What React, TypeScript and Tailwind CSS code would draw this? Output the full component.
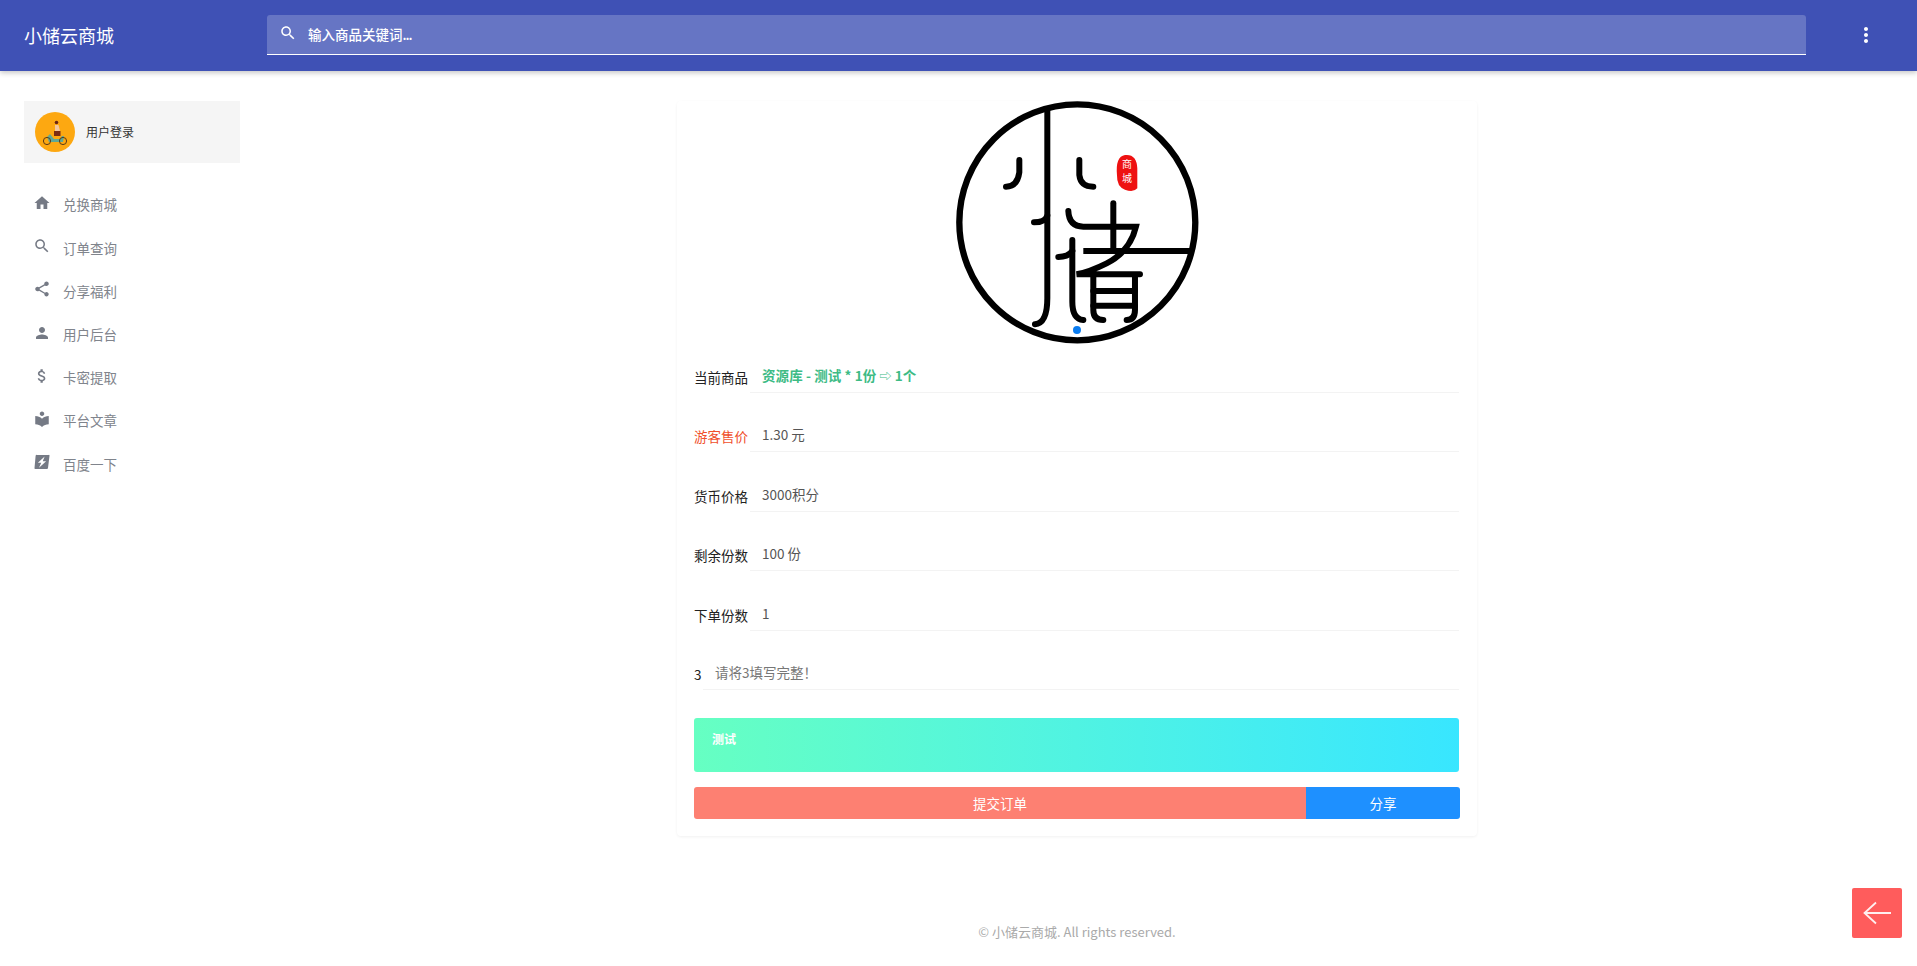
import type { ReactNode } from "react";

const FONT = "font-['Noto_Sans_CJK_SC','Microsoft_YaHei',sans-serif]";

const navItems = [
  {
    label: "兑换商城",
    d: "M10 20v-6h4v6h5v-8h3L12 3 2 12h3v8z",
  },
  {
    label: "订单查询",
    d: "M15.5 14h-.79l-.28-.27C15.41 12.59 16 11.11 16 9.5 16 5.91 13.09 3 9.5 3S3 5.91 3 9.5 5.91 16 9.5 16c1.61 0 3.09-.59 4.23-1.57l.27.28v.79l5 4.99L20.49 19l-4.99-5zm-6 0C7.01 14 5 11.99 5 9.5S7.01 5 9.5 5 14 7.01 14 9.5 11.99 14 9.5 14z",
  },
  {
    label: "分享福利",
    d: "M18 16.08c-.76 0-1.44.3-1.96.77L8.91 12.7c.05-.23.09-.46.09-.7s-.04-.47-.09-.7l7.05-4.11c.54.5 1.25.81 2.04.81 1.66 0 3-1.34 3-3s-1.34-3-3-3-3 1.34-3 3c0 .24.04.47.09.7L8.04 9.81C7.5 9.31 6.79 9 6 9c-1.66 0-3 1.34-3 3s1.34 3 3 3c.79 0 1.5-.31 2.04-.81l7.12 4.16c-.05.21-.08.43-.08.65 0 1.61 1.31 2.92 2.92 2.92 1.61 0 2.92-1.31 2.92-2.92s-1.31-2.92-2.92-2.92z",
  },
  {
    label: "用户后台",
    d: "M12 12c2.21 0 4-1.79 4-4s-1.79-4-4-4-4 1.79-4 4 1.79 4 4 4zm0 2c-2.67 0-8 1.34-8 4v2h16v-2c0-2.66-5.33-4-8-4z",
  },
  {
    label: "卡密提取",
    d: "M11.8 10.9c-2.27-.59-3-1.2-3-2.15 0-1.09 1.01-1.85 2.7-1.85 1.78 0 2.44.85 2.5 2.1h2.21c-.07-1.72-1.12-3.3-3.21-3.81V3h-3v2.16c-1.94.42-3.5 1.68-3.5 3.61 0 2.31 1.91 3.46 4.7 4.13 2.5.6 3 1.48 3 2.41 0 .69-.49 1.79-2.7 1.79-2.06 0-2.87-.92-2.98-2.1h-2.2c.12 2.19 1.76 3.42 3.68 3.83V21h3v-2.15c1.95-.37 3.5-1.5 3.5-3.55 0-2.84-2.43-3.81-4.7-4.4z",
  },
  {
    label: "平台文章",
    d: "M12 11.55C9.64 9.35 6.48 8 3 8v11c3.48 0 6.64 1.35 9 3.55 2.36-2.19 5.52-3.55 9-3.55V8c-3.48 0-6.64 1.35-9 3.55zM12 8c1.66 0 3-1.34 3-3s-1.34-3-3-3-3 1.34-3 3 1.34 3 3 3z",
  },
  {
    label: "百度一下",
    d: "M5 2.5h16a1 1 0 0 1 1 1.2L20 20a1.5 1.5 0 0 1-1.5 1.2H3a1 1 0 0 1-1-1.2L3.5 3.7A1.5 1.5 0 0 1 5 2.5zM15.5 4.5L6.5 13h4.5L8 19.5l9.5-8.5H13z",
  },
];

const rows: { label: string; value: ReactNode; labelCls: string; valueCls: string }[] = [
  {
    label: "当前商品",
    value: (
      <>
        资源库 - 测试 * 1份 <span className="text-[12px] font-normal">⇨</span> 1个
      </>
    ),
    labelCls: "text-[#222]",
    valueCls: "text-[#3dbb85] font-bold tracking-[0.1px]",
  },
  { label: "游客售价", value: "1.30 元", labelCls: "text-[#f0502c]", valueCls: "text-[#555]" },
  { label: "货币价格", value: "3000积分", labelCls: "text-[#222]", valueCls: "text-[#555]" },
  { label: "剩余份数", value: "100 份", labelCls: "text-[#222]", valueCls: "text-[#555]" },
  { label: "下单份数", value: "1", labelCls: "text-[#222]", valueCls: "text-[#555]" },
];

const Logo = () => (
  <svg viewBox="0 0 320 270" className="w-[320px] h-[270px] block" fill="none" stroke="#000" strokeLinecap="round">
    <g transform="scale(0.3333)" strokeWidth="18">
      <circle cx="472" cy="412" r="354" strokeWidth="19" />
      <path d="M382 75V640Q382 715 345 718" />
      <path d="M342 412Q375 412 382 392" />
      <path d="M298 225V262Q292 305 258 305" />
      <path d="M478 225V270Q482 305 520 305" />
      <path d="M445 378Q447 425 490 425H648Q630 500 560 535Q510 560 470 568H660" />
      <path d="M580 355V498" />
      <path d="M490 498H820" strokeLinecap="butt" />
      <path d="M457 465V650Q457 702 490 705" />
      <path d="M415 516Q445 516 457 498" />
      <path d="M520 570V675Q520 705 550 705" />
      <path d="M645 570V675Q645 705 620 705" />
      <path d="M520 618H645M520 662H645" />
      <circle cx="471" cy="735" r="12" fill="#0a7cf0" stroke="none" />
      <path
        d="M615 210Q650 206 652 250L652 310Q640 324 615 314Q590 305 591 270Q586 215 615 210z"
        fill="#ee1111"
        stroke="none"
      />
      <text x="621" y="250" textAnchor="middle" fontSize="30" fill="#fff" stroke="none">商</text>
      <text x="621" y="292" textAnchor="middle" fontSize="30" fill="#fff" stroke="none">城</text>
    </g>
  </svg>
);

const Avatar = () => (
  <div className="w-10 h-10 rounded-full bg-[#fda811] shrink-0 overflow-hidden">
    <svg viewBox="0 0 40 40" className="w-10 h-10 block">
      <circle cx="21.5" cy="10.5" r="1.8" fill="#6b2412" />
      <path d="M20 13h3.5l1.5 6h-5z" fill="#f3c79e" />
      <path d="M19 19h6.5v5H19z" fill="#7a2c14" />
      <path d="M12 25l3-3 4 5h6l2-3h2l-1 6H14z" fill="#5fa896" />
      <circle cx="12" cy="29" r="3.6" fill="none" stroke="#5a3a18" strokeWidth="1" />
      <circle cx="28" cy="29" r="3.6" fill="none" stroke="#5a3a18" strokeWidth="1" />
    </svg>
  </div>
);

const App = () => {
  return (
    <div className={`${FONT} bg-white h-[966px] overflow-hidden flex flex-col`}>
      <header className="h-[71px] bg-[#3f51b5] shrink-0 flex items-center shadow-[0_2px_5px_rgba(0,0,0,0.22)] relative z-10">
        <div className="w-[267px] pl-6 text-[18px] text-white">小储云商城</div>
        <div className="w-[1539px] h-10 mb-[1px] bg-[#6675c4] rounded-t-[3px] border-b border-white flex items-center pl-3">
          <svg viewBox="0 0 24 24" className="w-[18px] h-[18px] fill-white mb-[3px]">
            <path d="M15.5 14h-.79l-.28-.27C15.41 12.59 16 11.11 16 9.5 16 5.91 13.09 3 9.5 3S3 5.91 3 9.5 5.91 16 9.5 16c1.61 0 3.09-.59 4.23-1.57l.27.28v.79l5 4.99L20.49 19l-4.99-5zm-6 0C7.01 14 5 11.99 5 9.5S7.01 5 9.5 5 14 7.01 14 9.5 11.99 14 9.5 14z" />
          </svg>
          <span className="ml-[11px] text-[13.5px] font-medium text-white">
            输入商品关键词<span className="tracking-[-1px]">...</span>
          </span>
        </div>
        <div className="flex-1 flex justify-center pl-[8px] mb-[1px]">
          <svg viewBox="0 0 24 24" className="w-6 h-6 fill-white">
            <path d="M12 8c1.1 0 2-.9 2-2s-.9-2-2-2-2 .9-2 2 .9 2 2 2zm0 2c-1.1 0-2 .9-2 2s.9 2 2 2 2-.9 2-2-.9-2-2-2zm0 6c-1.1 0-2 .9-2 2s.9 2 2 2 2-.9 2-2-.9-2-2-2z" />
          </svg>
        </div>
      </header>

      <div className="flex-1 flex min-h-0">
        <aside className="w-[240px] shrink-0 pl-6 pt-[30px]">
          <div className="h-[62px] bg-[#f5f5f5] flex items-center pl-[11px] gap-[11px]">
            <Avatar />
            <span className="text-[12px] text-[#333]">用户登录</span>
          </div>
          <nav className="mt-[20px] pl-[9px]">
            {navItems.map((item) => (
              <div key={item.label} className="h-[43.2px] flex items-center">
                <svg viewBox="0 0 24 24" className="w-[18px] h-[18px] fill-[#757a85] mb-[3px]">
                  <path fillRule="evenodd" d={item.d} />
                </svg>
                <span className="ml-[12px] text-[13.5px] text-[#80848c]">{item.label}</span>
              </div>
            ))}
          </nav>
        </aside>

        <main className="flex-1 flex flex-col items-center pr-[3px] pt-[30px] min-w-0">
          <div className="w-[800px] h-[735px] bg-white rounded-[4px] shadow-[0_1px_3px_rgba(0,0,0,0.06)] pl-[17px] pr-[18px]">
            <div className="flex justify-center -mt-[16px] pl-[6px] h-[270px] overflow-hidden">
              <Logo />
            </div>
            <div className="-mt-[22px]">
              {rows.map((row) => (
                <div key={row.label} className="h-[59.5px] flex items-end">
                  <div className={`w-[56px] shrink-0 h-9 text-[13.5px] leading-10 ${row.labelCls}`}>{row.label}</div>
                  <div className={`flex-1 h-9 border-b border-[#f3f3f3] pl-[12px] text-[13.5px] leading-9 ${row.valueCls}`}>
                    {row.value}
                  </div>
                </div>
              ))}
              <div className="h-[59.5px] flex items-end">
                <div className="w-[9px] shrink-0 h-9 text-[13.5px] leading-10 text-[#222]">3</div>
                <div className="flex-1 h-9 border-b border-[#f3f3f3] pl-[12px] text-[13.5px] leading-9 text-[#777]">
                  请将3填写完整！
                </div>
              </div>
            </div>
            <div className="mt-[28px] h-[54px] rounded-[3px] bg-gradient-to-r from-[#66ffc2] to-[#38e6ff] px-[18px] py-[11px] text-[12px] leading-5 font-bold text-white">
              测试
            </div>
            <div className="mt-[15px] -mr-[1px] h-8 flex rounded-[3px] overflow-hidden text-[13.5px] text-white">
              <div className="w-[612px] bg-[#fd8072] flex items-center justify-center">提交订单</div>
              <div className="flex-1 bg-[#1e90ff] flex items-center justify-center">分享</div>
            </div>
          </div>
          <div className="mt-[86px] text-[13px] text-[#aaa]">© 小储云商城. All rights reserved.</div>
        </main>
      </div>

      <div className="fixed right-[15px] bottom-[28px] w-[50px] h-[50px] bg-[#ff5c5c] rounded-[2px] flex items-center justify-center">
        <svg viewBox="0 0 30 24" className="w-[30px] h-6" fill="none" stroke="#fff" strokeOpacity="0.9" strokeWidth="1.8">
          <path d="M29 12H2M14 1.5L2.5 12L14 22.5" />
        </svg>
      </div>
    </div>
  );
};

export default App;
